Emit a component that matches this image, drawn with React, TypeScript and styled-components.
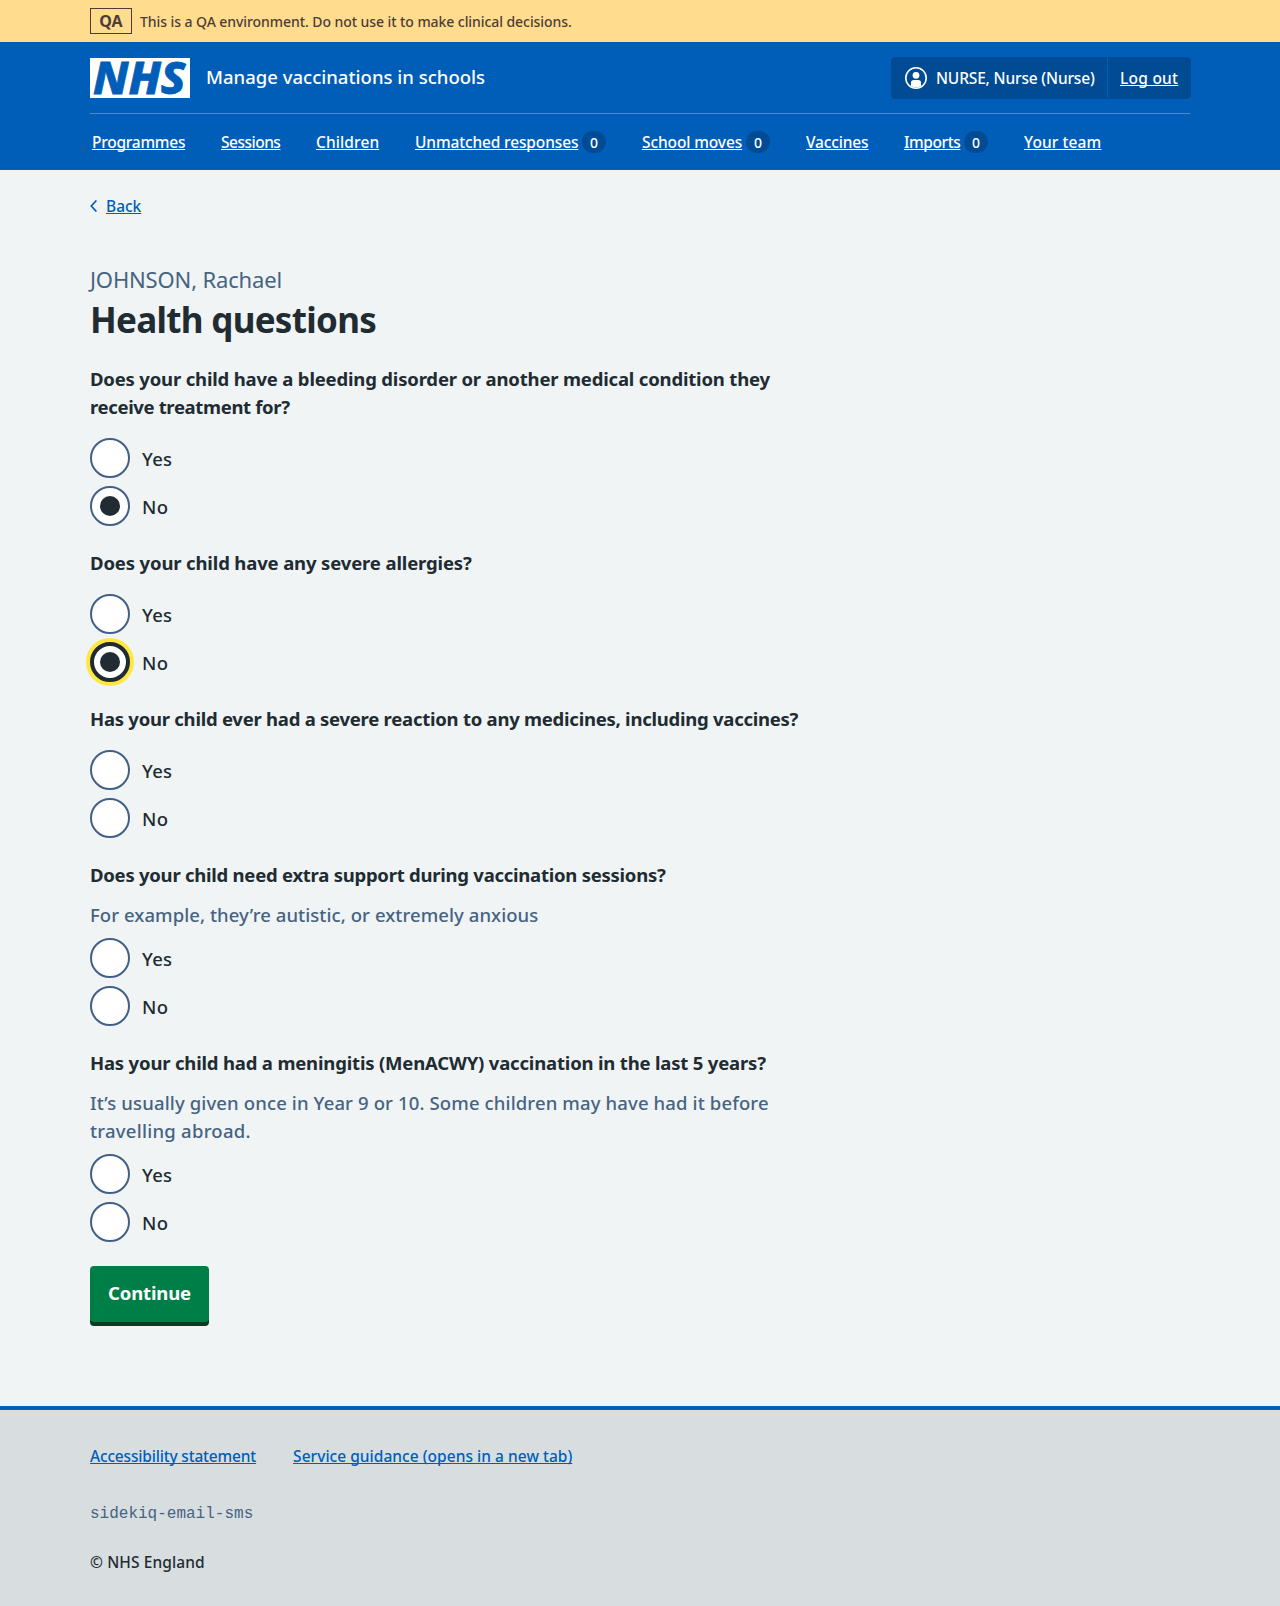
import React, { useState } from "react";
import styled, { createGlobalStyle, css } from "styled-components";

const color = {
  blue: "#005eb8",
  darkBlue: "#004b93",
  text: "#212b32",
  secondary: "#466381",
  ring: "#435f86",
  page: "#f0f4f5",
  footer: "#d8dde0",
  green: "#007e48",
  greenShadow: "#00401e",
  focus: "#ffe742",
};

const GlobalStyle = createGlobalStyle`
  *, *::before, *::after { box-sizing: border-box; }
  body {
    margin: 0;
    background: ${color.footer};
    color: ${color.text};
    font-family: "Noto Sans", "Open Sans", Arial, sans-serif;
    font-size: 15.5px;
    font-weight: 500;
    line-height: 24px;
  }
`;

const tracking = css<{ $track?: number }>`
  letter-spacing: ${(p) => p.$track ?? 0}px;
`;

const Container = styled.div`
  width: 1100px;
  margin: 0 auto;
`;

const Banner = styled.div`
  height: 42px;
  background: #ffdc8e;
  color: #4d3c38;
`;

const BannerInner = styled(Container)`
  display: flex;
  align-items: center;
  gap: 8px;
  height: 42px;
  font-size: 14px;
`;

const BannerText = styled.span`
  padding-top: 1px;
  letter-spacing: -0.07px;
`;

const Tag = styled.strong`
  width: 42px;
  height: 26px;
  border: 1px solid currentColor;
  font-size: 16px;
  font-weight: 700;
  line-height: 24px;
  text-align: center;
`;

const Header = styled.header`
  height: 128px;
  background: ${color.blue};
  color: #fff;
`;

const HeaderTop = styled(Container)`
  display: flex;
  align-items: center;
  height: 72px;
  border-bottom: 1px solid #4a8ccb;
`;

const Logo = styled.svg`
  display: block;
  width: 100px;
  height: 40px;
  overflow: visible;
`;

const ServiceName = styled.span`
  margin-left: 16px;
  padding-bottom: 1px;
  font-size: 18.5px;
  line-height: 28px;
  ${tracking}
`;

const Account = styled.div`
  display: flex;
  height: 42px;
  margin: 0 -1px 0 auto;
  border: 1px solid ${color.darkBlue};
  border-radius: 4px;
  background: ${color.darkBlue};
`;

const AccountItem = styled.div<{ $width: number; $divided?: boolean }>`
  display: flex;
  align-items: center;
  gap: 9px;
  width: ${(p) => p.$width}px;
  padding: 1px 0 0 13px;
  white-space: nowrap;
  ${(p) =>
    p.$divided &&
    css`
      padding-left: 12px;
      border-left: 1px solid ${color.blue};
    `}

  svg {
    flex: none;
  }
`;

const Link = styled.a<{ $track?: number }>`
  color: ${color.blue};
  text-decoration: underline;
  text-decoration-thickness: 1px;
  text-decoration-skip-ink: none;
  text-underline-offset: 1px;
  white-space: nowrap;
  ${tracking}
`;

const LightLink = styled(Link)`
  color: #fff;
`;

const Name = styled.span`
  ${tracking}
`;

const Nav = styled.nav`
  width: 1100px;
  height: 56px;
  margin: 0 auto;
  padding: 16px 0 0 2px;
  display: flex;
  gap: 36px;
`;

const NavItem = styled.div<{ $width: number }>`
  display: flex;
  justify-content: space-between;
  width: ${(p) => p.$width}px;
  height: 24px;
`;

const Count = styled.span`
  width: 24px;
  height: 22px;
  margin-top: 1px;
  border-radius: 12px;
  background: ${color.darkBlue};
  font-size: 14px;
  line-height: 24px;
  text-align: center;
`;

const Page = styled.div`
  height: 1236px;
  background: ${color.page};
`;

const BackRow = styled.div`
  display: flex;
  align-items: center;
  gap: 9px;
  height: 24px;
`;

const Body = styled(Container)`
  padding-top: 24px;
`;

const Caption = styled.span`
  display: block;
  margin-top: 47px;
  color: ${color.secondary};
  font-size: 22px;
  font-weight: 400;
  line-height: 28px;
  ${tracking}
`;

const Title = styled.h1`
  margin: 4px 0 0 0;
  padding-bottom: 22px;
  font-size: 35px;
  font-weight: 700;
  line-height: 46px;
  ${tracking}
`;

const Fieldset = styled.fieldset`
  min-width: 0;
  margin: 0 0 23px;
  padding: 0;
  border: 0;
  font-size: 18.5px;
  line-height: 28px;
`;

const Legend = styled.legend`
  padding: 0;
  font-weight: 700;
`;

const Line = styled.span`
  display: block;
  white-space: nowrap;
  ${tracking}
`;

const Hint = styled.div`
  margin-top: 12px;
  color: ${color.secondary};
`;

const Radios = styled.div<{ $hinted?: boolean }>`
  display: grid;
  gap: 8px;
  margin-top: ${(p) => (p.$hinted ? 9 : 17)}px;
`;

const Option = styled.label`
  display: flex;
  align-items: flex-start;
  gap: 12px;
  height: 40px;

  span {
    padding-top: 7px;
    letter-spacing: 0.3px;
  }
`;

const Radio = styled.input<{ $ring?: boolean }>`
  appearance: none;
  display: grid;
  place-items: center;
  width: 40px;
  height: 40px;
  margin: 0;
  border: 2px solid ${color.ring};
  border-radius: 50%;
  background: #fff;
  outline: none;

  &:checked::before {
    content: "";
    width: 20px;
    height: 20px;
    border-radius: 50%;
    background: ${color.text};
  }

  ${(p) =>
    p.$ring &&
    css`
      border: 4px solid ${color.text};
      box-shadow: 0 0 0 4px ${color.focus};
    `}
`;

const Button = styled.button`
  display: block;
  width: 119px;
  height: 56px;
  margin: 24px 0 0;
  padding: 0 0 3px;
  border: 0;
  border-radius: 4px;
  background: ${color.green};
  box-shadow: 0 4px 0 ${color.greenShadow};
  color: #fff;
  font: 700 18.5px/28px "Noto Sans", "Open Sans", sans-serif;
  ${tracking}
`;

const Footer = styled.footer`
  height: 200px;
  border-top: 4px solid ${color.blue};
  background: ${color.footer};
`;

const FooterInner = styled(Container)`
  padding-top: 34px;
`;

const FooterLinks = styled.div`
  display: flex;
  gap: 37px;
`;

const Mono = styled.div`
  margin-top: 34px;
  color: ${color.secondary};
  font: 16px/24px "Liberation Mono", monospace;
`;

const Copyright = styled.div`
  margin-top: 24px;
  ${tracking}
`;

interface TextLine {
  text: string;
  track: number;
}

interface Question {
  id: string;
  legend: TextLine[];
  hint?: TextLine[];
}

const navigation: { label: string; width: number; track: number; count?: number }[] = [
  { label: "Programmes", width: 93, track: -0.25 },
  { label: "Sessions", width: 59, track: -0.5 },
  { label: "Children", width: 63, track: 0.1 },
  { label: "Unmatched responses", width: 191, track: -0.14, count: 0 },
  { label: "School moves", width: 128, track: -0.11, count: 0 },
  { label: "Vaccines", width: 62, track: -0.15 },
  { label: "Imports", width: 84, track: -0.42, count: 0 },
  { label: "Your team", width: 77, track: 0.1 },
];

const questions: Question[] = [
  {
    id: "bleeding",
    legend: [
      { text: "Does your child have a bleeding disorder or another medical condition they", track: -0.18 },
      { text: "receive treatment for?", track: -0.35 },
    ],
  },
  { id: "allergies", legend: [{ text: "Does your child have any severe allergies?", track: -0.14 }] },
  {
    id: "reaction",
    legend: [
      { text: "Has your child ever had a severe reaction to any medicines, including vaccines?", track: -0.25 },
    ],
  },
  {
    id: "support",
    legend: [{ text: "Does your child need extra support during vaccination sessions?", track: -0.25 }],
    hint: [{ text: "For example, they’re autistic, or extremely anxious", track: 0.07 }],
  },
  {
    id: "menacwy",
    legend: [{ text: "Has your child had a meningitis (MenACWY) vaccination in the last 5 years?", track: -0.18 }],
    hint: [
      { text: "It’s usually given once in Year 9 or 10. Some children may have had it before", track: 0.13 },
      { text: "travelling abroad.", track: 0.25 },
    ],
  },
];

function Lines({ lines }: { lines: TextLine[] }) {
  return (
    <>
      {lines.map((line) => (
        <Line key={line.text} $track={line.track}>
          {line.text}{" "}
        </Line>
      ))}
    </>
  );
}

function NhsLogo() {
  return (
    <Logo viewBox="0 0 100 40" role="img" aria-label="NHS">
      <rect width="100" height="40" fill="#fff" />
      <text
        x="3"
        y="36"
        textLength="92.5"
        lengthAdjust="spacingAndGlyphs"
        fill={color.blue}
        stroke={color.blue}
        strokeWidth="0.8"
        fontFamily="Noto Sans"
        fontStyle="italic"
        fontWeight="800"
        fontSize="45"
      >
        NHS
      </text>
    </Logo>
  );
}

function UserIcon() {
  return (
    <svg width="22" height="22" viewBox="0 0 22 22" fill="#fff" aria-hidden="true">
      <circle cx="11" cy="11" r="10.2" fill="none" stroke="#fff" strokeWidth="1.6" />
      <circle cx="11" cy="8.3" r="3.4" />
      <path d="M6 19v-3.3a2.8 2.8 0 0 1 2.8-2.8h4.4a2.8 2.8 0 0 1 2.8 2.8V19a9.5 9.5 0 0 1-10 0z" />
    </svg>
  );
}

export default function App() {
  const [answers, setAnswers] = useState<Record<string, string>>({ bleeding: "No", allergies: "No" });
  const [active, setActive] = useState("allergies");

  return (
    <>
      <GlobalStyle />
      <Banner>
        <BannerInner>
          <Tag>QA</Tag>
          <BannerText>This is a QA environment. Do not use it to make clinical decisions.</BannerText>
        </BannerInner>
      </Banner>
      <Header>
        <HeaderTop>
          <NhsLogo />
          <ServiceName $track={0.01}>Manage vaccinations in schools</ServiceName>
          <Account>
            <AccountItem $width={215}>
              <UserIcon />
              <Name $track={-0.16}>NURSE, Nurse (Nurse)</Name>
            </AccountItem>
            <AccountItem $width={83} $divided>
              <LightLink $track={0.25}>Log out</LightLink>
            </AccountItem>
          </Account>
        </HeaderTop>
        <Nav>
          {navigation.map((item) => (
            <NavItem key={item.label} $width={item.width}>
              <LightLink $track={item.track}>{item.label}</LightLink>
              {item.count !== undefined && <Count>{item.count}</Count>}
            </NavItem>
          ))}
        </Nav>
      </Header>
      <Page>
        <Body>
          <BackRow>
            <svg width="7" height="12" viewBox="0 0 7 12" aria-hidden="true">
              <path d="M6.4.5 1.3 6l5.1 5.5" fill="none" stroke={color.blue} strokeWidth="1.7" />
            </svg>
            <Link>Back</Link>
          </BackRow>
          <Caption $track={-0.15}>JOHNSON, Rachael</Caption>
          <Title $track={-0.7}>Health questions</Title>
          {questions.map((question) => (
            <Fieldset key={question.id}>
              <Legend>
                <Lines lines={question.legend} />
              </Legend>
              {question.hint && (
                <Hint>
                  <Lines lines={question.hint} />
                </Hint>
              )}
              <Radios $hinted={!!question.hint}>
                {["Yes", "No"].map((answer) => (
                  <Option key={answer}>
                    <Radio
                      type="radio"
                      name={question.id}
                      checked={answers[question.id] === answer}
                      $ring={active === question.id && answers[question.id] === answer}
                      onChange={() => {
                        setAnswers({ ...answers, [question.id]: answer });
                        setActive(question.id);
                      }}
                    />
                    <span>{answer}</span>
                  </Option>
                ))}
              </Radios>
            </Fieldset>
          ))}
          <Button $track={-0.15}>Continue</Button>
        </Body>
      </Page>
      <Footer>
        <FooterInner>
          <FooterLinks>
            <Link $track={-0.18}>Accessibility statement</Link>
            <Link $track={0.03}>Service guidance (opens in a new tab)</Link>
          </FooterLinks>
          <Mono>sidekiq-email-sms</Mono>
          <Copyright $track={0.1}>© NHS England</Copyright>
        </FooterInner>
      </Footer>
    </>
  );
}
